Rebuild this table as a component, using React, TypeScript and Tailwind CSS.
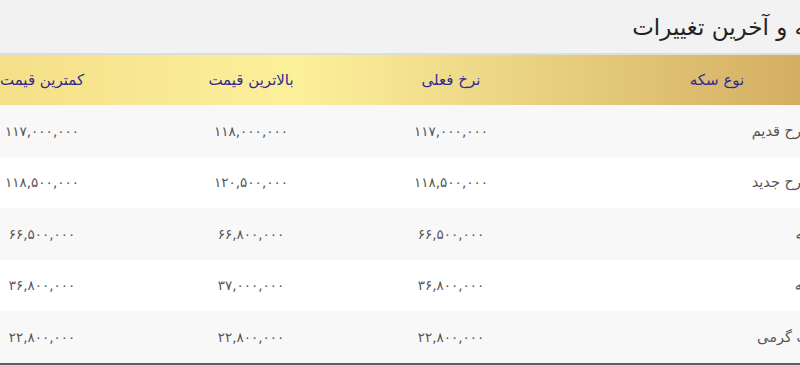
const rows = [
  { name: 'سکه طرح قدیم', current: '۱۱۷,۰۰۰,۰۰۰', high: '۱۱۸,۰۰۰,۰۰۰', low: '۱۱۷,۰۰۰,۰۰۰' },
  { name: 'سکه طرح جدید', current: '۱۱۸,۵۰۰,۰۰۰', high: '۱۲۰,۵۰۰,۰۰۰', low: '۱۱۸,۵۰۰,۰۰۰' },
  { name: 'نیم سکه', current: '۶۶,۵۰۰,۰۰۰', high: '۶۶,۸۰۰,۰۰۰', low: '۶۶,۵۰۰,۰۰۰' },
  { name: 'ربع سکه', current: '۳۶,۸۰۰,۰۰۰', high: '۳۷,۰۰۰,۰۰۰', low: '۳۶,۸۰۰,۰۰۰' },
  { name: 'سکه یک گرمی', current: '۲۲,۸۰۰,۰۰۰', high: '۲۲,۸۰۰,۰۰۰', low: '۲۲,۸۰۰,۰۰۰' },
]

// column widths, right to left: type, current, highest, lowest
const cols = 'grid grid-cols-[334px_198px_202px_216px]'

export default function App() {
  return (
    <div className="h-[365px] w-[800px] overflow-hidden bg-white font-['DejaVu_Sans',sans-serif]">
      <div dir="rtl" className="-ml-[66px] w-[950px]">
        <div className="flex h-[55px] items-center border-b-2 border-[#dddddd] bg-[#f2f2f2]">
          <h2 className="-mr-[16px] pt-[2px] text-[23px] text-[#222]">قیمت سکه و آخرین تغییرات</h2>
        </div>

        <div
          className={`${cols} h-[50px] items-center bg-[linear-gradient(to_left,#cda459_0%,#e8cf80_35%,#fdf09b_62%,#f2dc84_100%)] text-center text-[15px] text-[#2f2a93]`}
        >
          <div>نوع سکه</div>
          <div>نرخ فعلی</div>
          <div>بالاترین قیمت</div>
          <div>کمترین قیمت</div>
        </div>

        {rows.map((r, i) => (
          <div
            key={r.name}
            className={`${cols} h-[51.5px] items-center text-[13.5px] text-[#555] ${i % 2 === 0 ? 'bg-[#f8f8f8]' : 'bg-white'}`}
          >
            <div className="pr-[38px] pt-[2px] text-right text-[14.5px]">{r.name}</div>
            <div className="text-center">{r.current}</div>
            <div className="text-center">{r.high}</div>
            <div className="text-center">{r.low}</div>
          </div>
        ))}
        <div className="h-[2px] bg-[#5f5f5f]" />
        <div className="h-[2px] bg-[#bdbdbd]" />
      </div>
    </div>
  )
}
